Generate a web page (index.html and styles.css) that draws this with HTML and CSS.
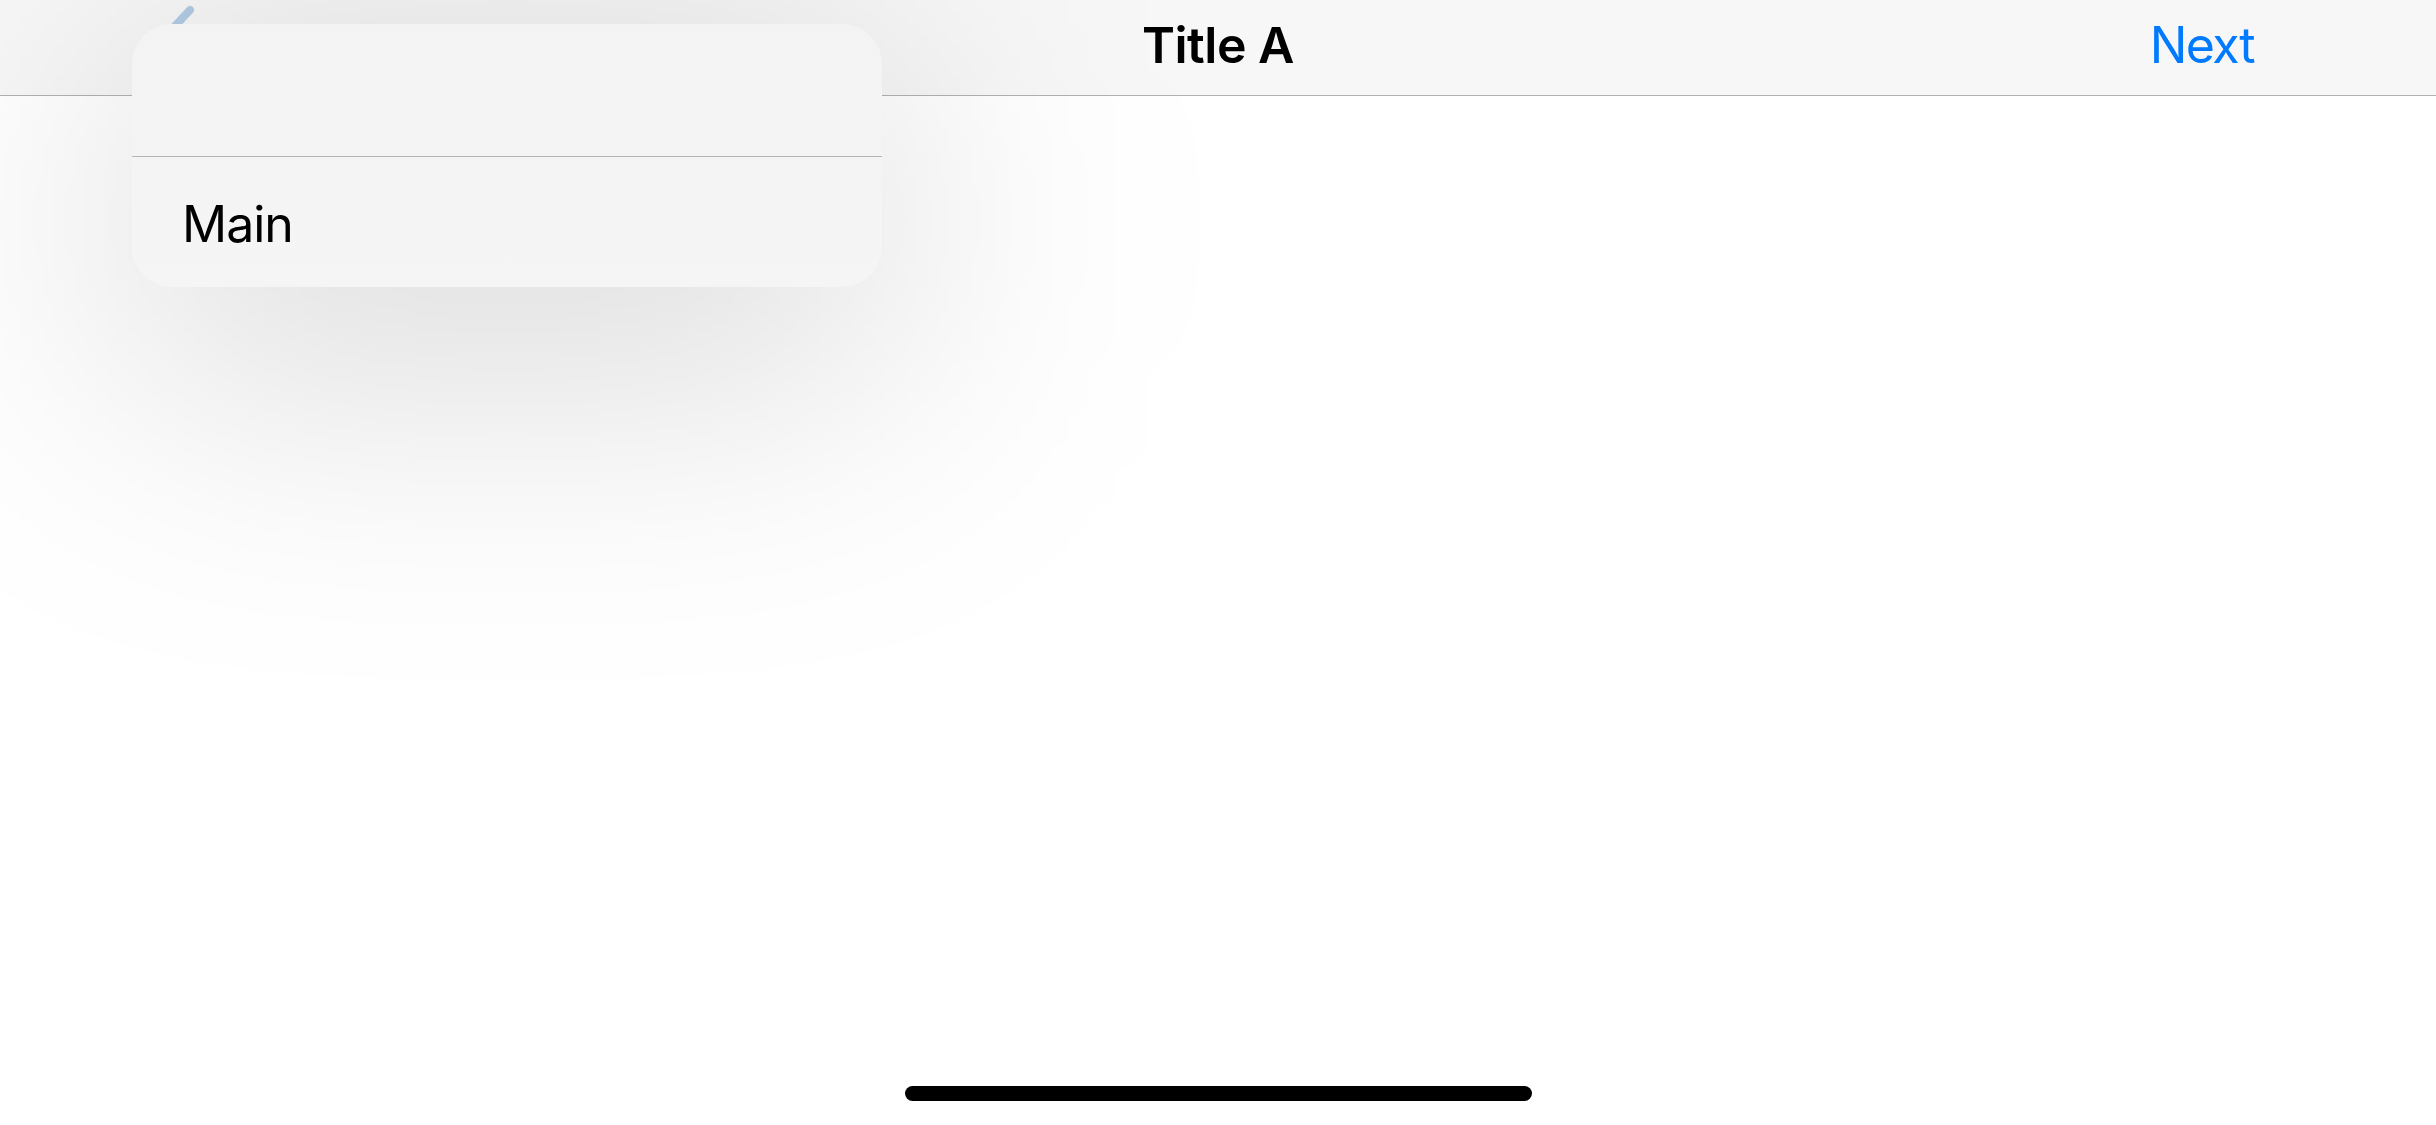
FILE: index.html
```html
<!DOCTYPE html>
<html>
<head>
<meta charset="utf-8">
<link rel="stylesheet" href="styles.css">
</head>
<body>
<div class="screen">
  <header class="navbar">
    <div class="nav-left">
      <svg class="back" width="48" height="72" viewBox="0 0 48 72"><path d="M40 6 L12 36 L40 66" fill="none" stroke="#b3cbe5" stroke-width="8" stroke-linecap="round" stroke-linejoin="round"/></svg>
    </div>
    <div class="nav-title">Title A</div>
    <div class="nav-right">Next</div>
  </header>
  <main class="content"></main>
  <div class="home-indicator"></div>
  <div class="menu-shadow"></div>
  <div class="menu">
    <div class="menu-row menu-row-empty"></div>
    <div class="menu-row menu-row-main">Main</div>
  </div>
</div>
</body>
</html>
```
FILE: styles.css
```css
html, body {
  margin: 0;
  padding: 0;
  background: #ffffff;
}
.screen {
  position: relative;
  width: 2436px;
  height: 1125px;
  overflow: hidden;
  display: flex;
  flex-direction: column;
  font-family: Inter, "Liberation Sans", sans-serif;
}
.navbar {
  height: 95px;
  border-bottom: 1px solid #b2b2b2;
  background: #f7f7f7;
  display: grid;
  grid-template-columns: 1fr auto 1fr;
  align-items: center;
  padding: 0 132px;
}
.nav-left {
  display: flex;
  align-items: flex-start;
  align-self: stretch;
}
.back {
  margin-left: 18px;
  margin-top: 4px;
}
.nav-title {
  font-size: 50px;
  font-weight: 600;
  color: #000;
  letter-spacing: -0.5px;
  padding-bottom: 6px;
}
.nav-right {
  justify-self: end;
  margin-right: 50px;
  font-size: 50px;
  color: #007aff;
  letter-spacing: -1.5px;
  padding-bottom: 6px;
}
.content {
  flex: 1;
}
.home-indicator {
  align-self: center;
  width: 627px;
  height: 15px;
  border-radius: 8px;
  background: #000;
  margin-bottom: 24px;
}
.menu-shadow {
  position: absolute;
  left: 112px;
  top: 60px;
  width: 790px;
  height: 320px;
  border-radius: 80px;
  background: rgba(0, 0, 0, 0.14);
  filter: blur(150px);
}
.menu {
  position: absolute;
  left: 132px;
  top: 24px;
  width: 750px;
  height: 263px;
  border-radius: 40px;
  background: linear-gradient(#f3f3f3, #f5f5f5);
  display: flex;
  flex-direction: column;
}
.menu-row {
  flex: 1;
  display: flex;
  align-items: center;
  padding: 0 50px;
  font-size: 50px;
  color: #000;
  letter-spacing: -1px;
}
.menu-row-empty {
  flex: 0 0 132px;
  border-bottom: 1px solid #b4b4b4;
}
.menu-row-main {
  padding-top: 4px;
}
```
